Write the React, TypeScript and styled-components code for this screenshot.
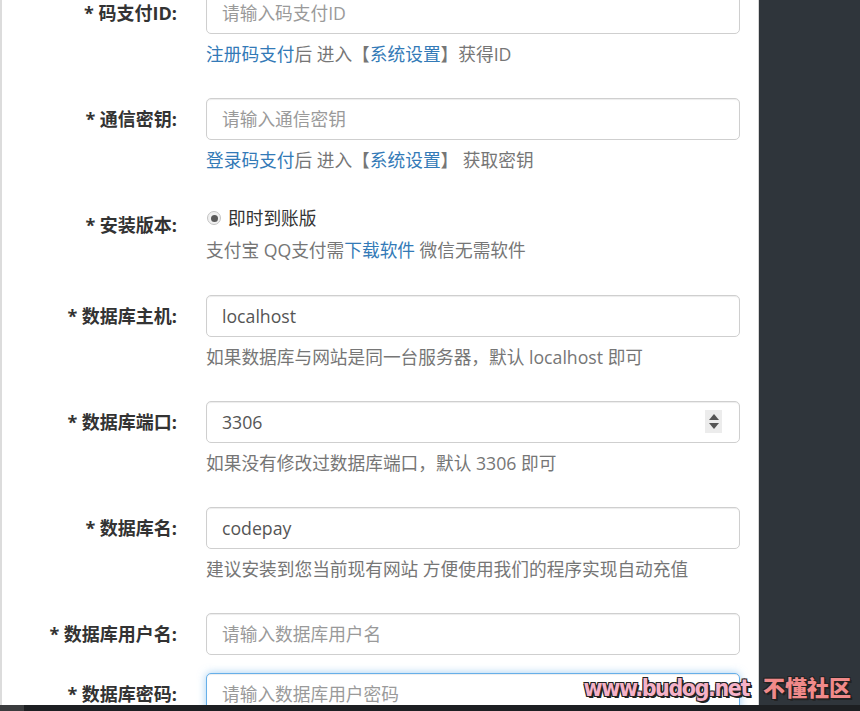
import React from "react";
import styled, { createGlobalStyle, css } from "styled-components";

const GlobalStyle = createGlobalStyle`
  html, body { margin: 0; padding: 0; background: #ffffff; }
  body { font-family: "Open Sans", "Noto Sans CJK SC", sans-serif; }
  * { box-sizing: border-box; }
`;

const Page = styled.div`
  position: relative;
  width: 860px;
  height: 711px;
  overflow: hidden;
  display: flex;
  flex-direction: column;
`;

const Body = styled.div`
  flex: 1;
  display: flex;
  min-height: 0;
`;

const Main = styled.main`
  width: 758px;
  background: #ffffff;
  border-left: 2px solid #dcdcdc;
  overflow: hidden;
`;

const Sidebar = styled.aside`
  flex: 1;
  background: #2f353b;
  border-left: 1px solid #d6d6d6;
`;

const BottomBar = styled.div`
  height: 6px;
  display: flex;
  background: #1d1f22;
`;

const BarTab = styled.div`
  width: 24px;
  background: #3b3c3e;
`;

const Form = styled.form`
  margin-top: -8px;
  display: flex;
  flex-direction: column;
`;

const Group = styled.div`
  display: flex;
  align-items: flex-start;
  margin-bottom: 18px;
`;

const Label = styled.label`
  width: 188px;
  flex: none;
  padding: 10px 13px 0 0;
  text-align: right;
  font-size: 18px;
  line-height: 22px;
  font-weight: 700;
  color: #333333;
  white-space: nowrap;
`;

const Control = styled.div`
  width: 534px;
  margin-left: 16px;
  display: flex;
  flex-direction: column;
`;

const InputWrap = styled.div`
  position: relative;
`;

const Input = styled.input<{ $focused?: boolean }>`
  display: block;
  width: 100%;
  height: 42px;
  padding: 0 15px;
  font-family: "Open Sans", "Noto Sans CJK SC", sans-serif;
  font-size: 17.7px;
  color: #555555;
  background: #ffffff;
  border: 1px solid #cfcfcf;
  border-radius: 5px;
  outline: none;
  box-shadow: inset 0 1px 1px rgba(0, 0, 0, 0.075);
  &::placeholder { color: #9a9a9a; }
  ${(p) =>
    p.$focused &&
    css`
      border-color: #66afe9;
      box-shadow: inset 0 1px 1px rgba(0, 0, 0, 0.075), 0 0 8px rgba(102, 175, 233, 0.6);
    `}
`;

const Spinner = styled.div`
  position: absolute;
  right: 18px;
  top: 9px;
  width: 17px;
  height: 23px;
  background: #ececec;
  display: flex;
  flex-direction: column;
  align-items: center;
  justify-content: center;
  gap: 3px;
`;

const Arrow = styled.span<{ $down?: boolean }>`
  width: 0;
  height: 0;
  border-left: 5px solid transparent;
  border-right: 5px solid transparent;
  ${(p) =>
    p.$down
      ? css`border-top: 6px solid #555;`
      : css`border-bottom: 6px solid #555;`}
`;

const Help = styled.div<{ $radio?: boolean }>`
  margin: ${(p) => (p.$radio ? "12px 0 17px" : "10px 0 16px")};
  font-size: 17.7px;
  line-height: 20px;
  color: #767676;
  white-space: nowrap;
`;

const Link = styled.a`
  color: #337ab7;
  text-decoration: none;
`;

const RadioRow = styled.label`
  display: flex;
  align-items: center;
  gap: 7px;
  padding-top: 4px;
  padding-left: 1px;
  font-size: 17.7px;
  line-height: 20px;
  color: #333333;
`;

const RadioDot = styled.span`
  width: 14px;
  height: 14px;
  border-radius: 50%;
  border: 1px solid #c4c4c4;
  background: #f0f0f0;
  display: flex;
  align-items: center;
  justify-content: center;
  &::after {
    content: "";
    width: 7px;
    height: 7px;
    border-radius: 50%;
    background: #5a5a5a;
  }
`;

const Watermark = styled.div`
  position: absolute;
  right: 9px;
  bottom: 11px;
  display: flex;
  align-items: baseline;
  gap: 14px;
  font-family: "DejaVu Sans Condensed", "DejaVu Sans", "Noto Sans CJK SC", sans-serif;
  font-weight: 900;
  font-size: 23px;
  line-height: 22px;
  text-shadow: -1px -1px 0 #222, 1px -1px 0 #222, -1px 1px 0 #222, 1px 1px 0 #222,
    2px 2px 0 #222;
`;

const MarkUrl = styled.span`
  color: #f5b2c8;
  letter-spacing: -1.4px;
`;

const MarkName = styled.span`
  color: #f08a8a;
  font-size: 22px;
`;

type Row = {
  label: string;
  placeholder?: string;
  value?: string;
  help?: React.ReactNode;
  spinner?: boolean;
  focused?: boolean;
};

const rows: Row[] = [
  {
    label: "* 码支付ID:",
    placeholder: "请输入码支付ID",
    help: (
      <>
        <Link>注册码支付</Link>后 进入【<Link>系统设置</Link>】获得ID
      </>
    ),
  },
  {
    label: "* 通信密钥:",
    placeholder: "请输入通信密钥",
    help: (
      <>
        <Link>登录码支付</Link>后 进入【<Link>系统设置</Link>】 获取密钥
      </>
    ),
  },
];

const rows2: Row[] = [
  {
    label: "* 数据库主机:",
    value: "localhost",
    help: "如果数据库与网站是同一台服务器，默认 localhost 即可",
  },
  {
    label: "* 数据库端口:",
    value: "3306",
    spinner: true,
    help: "如果没有修改过数据库端口，默认 3306 即可",
  },
  {
    label: "* 数据库名:",
    value: "codepay",
    help: "建议安装到您当前现有网站 方便使用我们的程序实现自动充值",
  },
  { label: "* 数据库用户名:", placeholder: "请输入数据库用户名" },
  { label: "* 数据库密码:", placeholder: "请输入数据库用户密码", focused: true },
];

const FieldGroup = ({ row }: { row: Row }) => (
  <Group>
    <Label>{row.label}</Label>
    <Control>
      <InputWrap>
        <Input
          $focused={row.focused}
          placeholder={row.placeholder}
          defaultValue={row.value}
          readOnly
        />
        {row.spinner && (
          <Spinner>
            <Arrow />
            <Arrow $down />
          </Spinner>
        )}
      </InputWrap>
      {row.help && <Help>{row.help}</Help>}
    </Control>
  </Group>
);

export default function App() {
  return (
    <Page>
      <GlobalStyle />
      <Body>
        <Main>
          <Form>
            {rows.map((r) => (
              <FieldGroup key={r.label} row={r} />
            ))}
            <Group>
              <Label>* 安装版本:</Label>
              <Control>
                <RadioRow>
                  <RadioDot />
                  即时到账版
                </RadioRow>
                <Help $radio>
                  支付宝 QQ支付需<Link>下载软件</Link> 微信无需软件
                </Help>
              </Control>
            </Group>
            {rows2.map((r) => (
              <FieldGroup key={r.label} row={r} />
            ))}
          </Form>
        </Main>
        <Sidebar />
      </Body>
      <BottomBar>
        <BarTab />
      </BottomBar>
      <Watermark>
        <MarkUrl>www.budog.net</MarkUrl>
        <MarkName>不懂社区</MarkName>
      </Watermark>
    </Page>
  );
}
